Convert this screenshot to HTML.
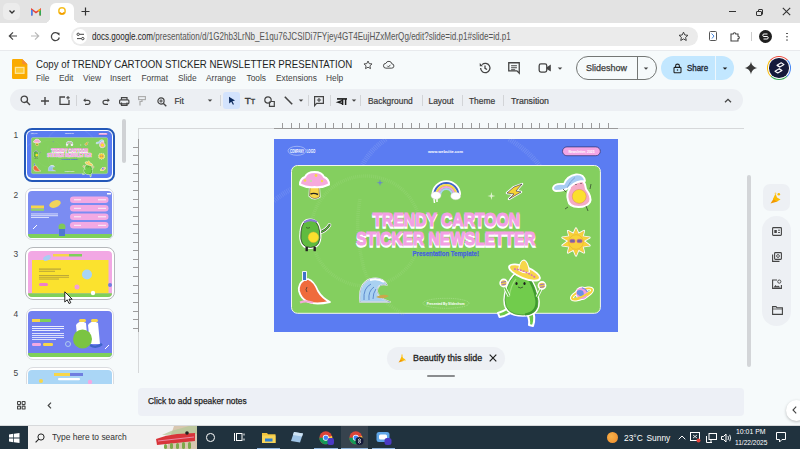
<!DOCTYPE html>
<html><head><meta charset="utf-8">
<style>
*{margin:0;padding:0;box-sizing:border-box}
html,body{width:800px;height:449px;overflow:hidden;background:#f6fafb;font-family:"Liberation Sans",sans-serif;color:#1f1f1f}
.a{position:absolute}
svg{display:block;position:absolute;overflow:visible}
.t{white-space:nowrap;position:absolute;transform-origin:0 0}
</style></head><body>
<!-- ============ BROWSER CHROME ============ -->
<div class="a" style="left:0;top:0;width:800px;height:23px;background:#e3e3e3"></div>
<!-- tab dropdown -->
<div class="a" style="left:3px;top:3px;width:17px;height:17px;border-radius:5px;background:#ececec"></div>
<svg style="left:8px;top:8px" width="8" height="8" viewBox="0 0 8 8"><path d="M1.5 2.5 L4 5 L6.5 2.5" fill="none" stroke="#333" stroke-width="1.3"/></svg>
<!-- gmail icon -->
<svg style="left:31px;top:8px" width="10" height="8" viewBox="0 0 10 8"><path d="M0.8 7.5V1.5L5 4.6 9.2 1.5V7.5" fill="none" stroke="#ea4335" stroke-width="1.5"/><path d="M0.8 7.5V2" stroke="#4285f4" stroke-width="1.6"/><path d="M9.2 7.5V2" stroke="#34a853" stroke-width="1.6"/><path d="M9.2 1.6L7.2 3" stroke="#fbbc04" stroke-width="1.4"/></svg>
<!-- active tab -->
<div class="a" style="left:50px;top:3px;width:24px;height:20px;background:#fff;border-radius:6px 6px 0 0"></div>
<div class="a" style="left:44px;top:17px;width:6px;height:6px;background:radial-gradient(circle at 0 0,#e3e3e3 6px,#fff 6.5px)"></div>
<div class="a" style="left:74px;top:17px;width:6px;height:6px;background:radial-gradient(circle at 100% 0,#e3e3e3 6px,#fff 6.5px)"></div>
<svg style="left:57px;top:6px" width="10" height="10" viewBox="0 0 10 10"><circle cx="5" cy="5" r="3.2" fill="none" stroke="#f6c026" stroke-width="1.5"/><path d="M2.6 6.6A3 3 0 0 0 7.4 6.6" fill="none" stroke="#f29900" stroke-width="1.6"/></svg>
<!-- plus -->
<svg style="left:81px;top:7px" width="9" height="9" viewBox="0 0 9 9"><path d="M4.5 0.5V8.5M0.5 4.5H8.5" stroke="#333" stroke-width="1.2"/></svg>
<!-- window controls -->
<div class="a" style="left:729px;top:11px;width:7px;height:1px;background:#333"></div>
<div class="a" style="left:757.5px;top:9px;width:5.5px;height:5.5px;border:1px solid #333;border-radius:1px;background:#e3e3e3"></div>
<div class="a" style="left:756px;top:10.5px;width:5.5px;height:5.5px;border:1px solid #333;border-radius:1px;background:#e3e3e3"></div>
<svg style="left:782px;top:7px" width="9" height="9" viewBox="0 0 9 9"><path d="M0.8 0.8L8.2 8.2M8.2 0.8L0.8 8.2" stroke="#333" stroke-width="1.1"/></svg>

<!-- toolbar -->
<div class="a" style="left:0;top:23px;width:800px;height:27px;background:#fff"></div>
<div class="a" style="left:0;top:49.5px;width:800px;height:1px;background:#e8eaed"></div>
<svg style="left:8px;top:31px" width="10" height="10" viewBox="0 0 10 10"><path d="M9 5H1.5M5 1.3L1.3 5 5 8.7" fill="none" stroke="#444" stroke-width="1.2"/></svg>
<svg style="left:30px;top:31px" width="10" height="10" viewBox="0 0 10 10"><path d="M1 5H8.5M5 1.3L8.7 5 5 8.7" fill="none" stroke="#b8b8b8" stroke-width="1.2"/></svg>
<svg style="left:50px;top:31px" width="11" height="11" viewBox="0 0 11 11"><path d="M8.8 3.5A4 4 0 1 0 9.3 6.5" fill="none" stroke="#444" stroke-width="1.3"/><path d="M6.5 1.8H9.5V4.8Z" fill="#444"/></svg>
<div class="a" style="left:71px;top:27px;width:627px;height:19px;border-radius:10px;background:#ebebeb"></div>
<div class="a" style="left:73px;top:29px;width:14px;height:15px;border-radius:8px;background:#fff"></div>
<svg style="left:76px;top:32px" width="9" height="9" viewBox="0 0 9 9"><circle cx="2.2" cy="2.3" r="1.2" fill="none" stroke="#444" stroke-width="1"/><path d="M3.5 2.3H8" stroke="#444" stroke-width="1"/><circle cx="6.8" cy="6.6" r="1.2" fill="none" stroke="#444" stroke-width="1"/><path d="M1 6.6H5.5" stroke="#444" stroke-width="1"/></svg>
<div class="t" style="left:92px;top:32px;font-size:10.1px;line-height:10px;color:#1f1f1f;transform:scaleX(0.80)"><span>docs.google.com</span><span style="color:#555">/presentation/d/1G2hb3LrNb_E1qu76JCSIDi7FYjey4GT4EujHZxMerQg/edit?slide=id.p1#slide=id.p1</span></div>
<!-- star in omnibox -->
<svg style="left:678px;top:31px" width="11" height="11" viewBox="0 0 24 24"><path d="M12 2.5l2.9 6.2 6.8.7-5.1 4.6 1.4 6.7L12 17.3l-6 3.4 1.4-6.7-5.1-4.6 6.8-.7z" fill="none" stroke="#333" stroke-width="2"/></svg>
<!-- ext icons -->
<div class="a" style="left:709px;top:31px;width:8px;height:10px;border:1px solid #555;border-radius:1.5px"></div><svg style="left:711px;top:33px" width="4" height="6" viewBox="0 0 4 6"><path d="M0.5 0.5L3 3 1 5.5" fill="none" stroke="#4a8ae0" stroke-width="1"/></svg>
<svg style="left:729px;top:30px" width="12" height="12" viewBox="0 0 12 12"><path d="M2 4H4.2A1.3 1.3 0 0 1 6.8 4H9V6.2A1.3 1.3 0 0 1 9 8.8V11H2Z" fill="none" stroke="#444" stroke-width="1.1"/></svg>
<div class="a" style="left:750.5px;top:32px;width:1px;height:9px;background:#ccc"></div>
<div class="a" style="left:759px;top:30px;width:13px;height:13px;border-radius:50%;background:#1f1f1f"></div>
<svg style="left:761px;top:32px" width="9" height="9" viewBox="0 0 9 9"><path d="M6.5 2H3A1 1 0 0 0 3 4.5H6A1 1 0 0 1 6 7H2.5" fill="none" stroke="#fff" stroke-width="1"/></svg>
<div class="a" style="left:786px;top:32.5px;width:1.6px;height:1.6px;background:#444;border-radius:1px;box-shadow:0 3.3px 0 #444,0 6.6px 0 #444"></div>

<!-- ============ DOCS HEADER ============ -->

<!-- slides logo -->
<svg style="left:12px;top:59.3px" width="15.4" height="20" viewBox="0 0 15 19" preserveAspectRatio="none"><path d="M1.2 0H10L15 5V17.8A1.2 1.2 0 0 1 13.8 19H1.2A1.2 1.2 0 0 1 0 17.8V1.2A1.2 1.2 0 0 1 1.2 0Z" fill="#faab00"/><path d="M10 0V5H15Z" fill="#f38b3a"/><rect x="3.3" y="8" width="8.4" height="5.6" fill="#fcc934" stroke="#fde59a" stroke-width="1.2"/></svg>
<div class="t" style="left:36px;top:58.5px;font-size:11.2px;line-height:11.2px;color:#1f1f1f;transform:scaleX(0.865)">Copy of TRENDY CARTOON STICKER NEWSLETTER PRESENTATION</div>
<svg style="left:362.7px;top:60px" width="10" height="10" viewBox="0 0 24 24"><path d="M12 2.5l2.9 6.2 6.8.7-5.1 4.6 1.4 6.7L12 17.3l-6 3.4 1.4-6.7-5.1-4.6 6.8-.7z" fill="none" stroke="#444" stroke-width="2.2"/></svg>
<svg style="left:383px;top:60px" width="11.5" height="9.6" viewBox="0 0 24 20"><path d="M6 17H18A4.5 4.5 0 0 0 18.5 8 6.5 6.5 0 0 0 6 7 5 5 0 0 0 6 17Z" fill="none" stroke="#444" stroke-width="2"/><path d="M9 12L11.5 14.5 15.5 10" fill="none" stroke="#444" stroke-width="2"/></svg>
<div class="t" style="left:36px;top:74.2px;font-size:8.4px;line-height:8.4px;color:#444">File</div>
<div class="t" style="left:59px;top:74.2px;font-size:8.4px;line-height:8.4px;color:#444">Edit</div>
<div class="t" style="left:83px;top:74.2px;font-size:8.4px;line-height:8.4px;color:#444">View</div>
<div class="t" style="left:110px;top:74.2px;font-size:8.4px;line-height:8.4px;color:#444">Insert</div>
<div class="t" style="left:141.5px;top:74.2px;font-size:8.4px;line-height:8.4px;color:#444">Format</div>
<div class="t" style="left:178px;top:74.2px;font-size:8.4px;line-height:8.4px;color:#444">Slide</div>
<div class="t" style="left:206px;top:74.2px;font-size:8.4px;line-height:8.4px;color:#444">Arrange</div>
<div class="t" style="left:246.5px;top:74.2px;font-size:8.4px;line-height:8.4px;color:#444">Tools</div>
<div class="t" style="left:276px;top:74.2px;font-size:8.4px;line-height:8.4px;color:#444">Extensions</div>
<div class="t" style="left:326px;top:74.2px;font-size:8.4px;line-height:8.4px;color:#444">Help</div>

<!-- right header icons -->
<svg style="left:478px;top:61px" width="14" height="14" viewBox="0 0 24 24"><path d="M4.5 12A8 8 0 1 0 7 6.2" fill="none" stroke="#444" stroke-width="2.2"/><path d="M3 3.5V9H8.5Z" fill="#444"/><path d="M12 7.5V12.5L15.5 14.5" fill="none" stroke="#444" stroke-width="2.2"/></svg>
<svg style="left:507px;top:61px" width="14" height="14" viewBox="0 0 24 24"><path d="M3 3H21V21L17 17H3Z" fill="none" stroke="#444" stroke-width="2.2"/><path d="M7 8H17M7 11.5H17M7 15H14" stroke="#444" stroke-width="1.8"/></svg>
<svg style="left:538px;top:62px" width="14" height="12" viewBox="0 0 24 20"><rect x="2" y="3" width="13" height="14" rx="3" fill="none" stroke="#444" stroke-width="2.2"/><path d="M15 8.5L22 4V16L15 11.5Z" fill="#444"/></svg>
<svg style="left:557px;top:67px" width="6" height="3" viewBox="-1 -0.5 8 4"><path d="M0 0H6L3 3Z" fill="#444"/></svg>

<div class="a" style="left:575.8px;top:56.3px;width:81px;height:23.3px;border:1px solid #747775;border-radius:12px"></div>
<div class="a" style="left:636.5px;top:56.3px;width:1px;height:23.3px;background:#747775"></div>
<div class="t" style="left:585.8px;top:63.6px;font-size:8.8px;line-height:8.8px;color:#3c3c3c;-webkit-text-stroke:.25px #3c3c3c;transform:scaleX(1.02)">Slideshow</div>
<svg style="left:643px;top:67px" width="6" height="3" viewBox="-1 -0.5 8 4"><path d="M0 0H6L3 3Z" fill="#444"/></svg>

<div class="a" style="left:661.4px;top:56.3px;width:73px;height:23.3px;border-radius:12px;background:#c2e7ff"></div>
<div class="a" style="left:715px;top:56.3px;width:1px;height:23.3px;background:#f9fbfd;opacity:.8"></div>
<svg style="left:672.5px;top:62.5px" width="9" height="10.5" viewBox="0 0 10 12"><rect x="1" y="5" width="8" height="6.2" rx="1" fill="none" stroke="#1f1f1f" stroke-width="1.2"/><path d="M2.8 5V3.5A2.2 2.2 0 0 1 7.2 3.5V5" fill="none" stroke="#1f1f1f" stroke-width="1.2"/><circle cx="5" cy="8" r="0.9" fill="#1f1f1f"/></svg>
<div class="t" style="left:686.8px;top:63.8px;font-size:8.8px;line-height:8.8px;color:#1f2a38;-webkit-text-stroke:.35px #1f2a38;transform:scaleX(0.9)">Share</div>
<svg style="left:721.5px;top:67px" width="6" height="3" viewBox="-1 -0.5 8 4"><path d="M0 0H6L3 3Z" fill="#1f1f1f"/></svg>

<svg style="left:743.5px;top:61px" width="14" height="14" viewBox="0 0 24 24"><path d="M12 1C12.8 7 17 11.2 23 12 17 12.8 12.8 17 12 23 11.2 17 7 12.8 1 12 7 11.2 11.2 7 12 1Z" fill="#3a3a3a"/></svg>
<div class="a" style="left:767px;top:55.6px;width:24.4px;height:24.4px;border-radius:50%;background:conic-gradient(from -45deg,#ea4335 0 25%,#4285f4 25% 50%,#34a853 50% 75%,#fbbc04 75% 100%)"></div>
<div class="a" style="left:768.4px;top:57px;width:21.6px;height:21.6px;border-radius:50%;background:#fff"></div>
<div class="a" style="left:769.4px;top:58px;width:19.6px;height:19.6px;border-radius:50%;background:#141a3a"></div>
<svg style="left:772.5px;top:61px" width="13" height="14" viewBox="0 0 13 14"><path d="M4 4.2L8.2 1.8 11 3.6 6.8 6Z M2 10.2L6.2 7.8 9 9.6 4.8 12Z" fill="none" stroke="#fff" stroke-width="1.1" stroke-linejoin="round"/><path d="M4 4.2L6.8 6 M6.2 7.8 L9 9.6" stroke="#fff" stroke-width="1.1"/></svg>

<!-- toolbar pill -->
<div class="a" style="left:10px;top:88.5px;width:733px;height:22.2px;border-radius:11.1px;background:#eceff3"></div>

<svg style="left:20px;top:95px" width="11" height="11" viewBox="0 0 11 11"><circle cx="4.3" cy="4.3" r="3.2" fill="none" stroke="#444" stroke-width="1.3"/><path d="M6.6 6.6L10 10" stroke="#444" stroke-width="1.4"/></svg>
<svg style="left:39.5px;top:95.5px" width="10" height="10" viewBox="0 0 10 10"><path d="M5 1V9M1 5H9" stroke="#444" stroke-width="1.4"/></svg>
<svg style="left:58.5px;top:96px" width="11" height="9" viewBox="0 0 11 9"><path d="M6 1H1V8.3H10V4" fill="none" stroke="#444" stroke-width="1.3"/><path d="M9 0V3.4M7.3 1.7H10.7" stroke="#444" stroke-width="1.1"/></svg>
<div class="a" style="left:75.5px;top:95px;width:1px;height:11px;background:#d2d4d7"></div>
<svg style="left:82.5px;top:97.5px" width="8" height="7" viewBox="0 0 8 7"><path d="M2 2.3H5A2 2 0 0 1 5 6.3H2" fill="none" stroke="#444" stroke-width="1.2"/><path d="M0.2 2.3L2.5 0.3V4.3Z" fill="#444"/></svg>
<svg style="left:101.5px;top:97.5px" width="8" height="7" viewBox="0 0 8 7"><path d="M6 2.3H3A2 2 0 0 0 3 6.3H6" fill="none" stroke="#444" stroke-width="1.2"/><path d="M7.8 2.3L5.5 0.3V4.3Z" fill="#444"/></svg>
<svg style="left:119px;top:96.5px" width="10.5" height="9" viewBox="0 0 10.5 9"><rect x="0.6" y="2.8" width="9.3" height="4" rx="1" fill="none" stroke="#444" stroke-width="1.2"/><path d="M2.5 2.8V0.6H8V2.8M2.5 5.5V8.4H8V5.5" fill="none" stroke="#444" stroke-width="1.2"/></svg>
<svg style="left:138px;top:96px" width="8" height="10" viewBox="0 0 8 10"><rect x="0.6" y="0.6" width="6.8" height="3" fill="none" stroke="#aaa" stroke-width="1.1"/><path d="M4 3.6V5.5H2V9.5" fill="none" stroke="#aaa" stroke-width="1.2"/></svg>
<svg style="left:156.5px;top:96.5px" width="10" height="10" viewBox="0 0 10 10"><circle cx="4" cy="4" r="3.1" fill="none" stroke="#444" stroke-width="1.2"/><path d="M6.2 6.2L9.3 9.3" stroke="#444" stroke-width="1.3"/><path d="M4 2.3V5.7M2.3 4H5.7" stroke="#444" stroke-width="1"/></svg>
<div class="t" style="left:174.5px;top:96.8px;font-size:8.4px;line-height:8.4px;color:#3a3a3a;-webkit-text-stroke:.2px #3a3a3a">Fit</div>
<svg style="left:207px;top:99.3px" width="6" height="3" viewBox="-1 -0.5 8 4"><path d="M0 0H6L3 3Z" fill="#444"/></svg>
<div class="a" style="left:219.5px;top:95px;width:1px;height:11px;background:#d2d4d7"></div>
<div class="a" style="left:223px;top:91.8px;width:16.8px;height:16.8px;border-radius:3px;background:#d3e3fd"></div>
<svg style="left:227.5px;top:96px" width="8" height="9" viewBox="0 0 8 9"><path d="M1 0.8L7 4.6 4.4 5.2 6 8.3 4.9 8.8 3.3 5.8 1.2 7.5Z" fill="#0d2a5c"/></svg>
<div class="t" style="left:244.8px;top:96.2px;font-size:9.8px;line-height:9.8px;color:#3a3a3a;-webkit-text-stroke:.35px #3a3a3a">T<span style="font-size:7.2px">T</span></div>
<svg style="left:264px;top:95.5px" width="11" height="11" viewBox="0 0 11 11"><circle cx="4" cy="4" r="3.2" fill="none" stroke="#444" stroke-width="1.2"/><path d="M5.5 5.5V10.3H10.3V5.5H7" fill="none" stroke="#444" stroke-width="1.2"/></svg>
<svg style="left:283.5px;top:96px" width="9" height="9" viewBox="0 0 9 9"><path d="M0.8 0.8L8.2 8.2" stroke="#444" stroke-width="1.6"/></svg>
<svg style="left:298px;top:99.3px" width="6" height="3" viewBox="-1 -0.5 8 4"><path d="M0 0H6L3 3Z" fill="#444"/></svg>
<div class="a" style="left:307.5px;top:95px;width:1px;height:11px;background:#d2d4d7"></div>
<svg style="left:314px;top:95.5px" width="10" height="11" viewBox="0 0 10 11"><path d="M0.6 0.6H9.4V7.4H2.6L0.6 9.6Z" fill="none" stroke="#444" stroke-width="1.2"/><path d="M5 1.9V6.1M2.9 4H7.1" stroke="#444" stroke-width="1.1"/></svg>
<div class="a" style="left:329.5px;top:95px;width:1px;height:11px;background:#d2d4d7"></div>
<svg style="left:337px;top:97.8px" width="10" height="7" viewBox="0 0 10 7"><path d="M0 0.9H10" stroke="#1f1f1f" stroke-width="1.6"/><path d="M5.6 0.9V6.9M8.6 0.9V6.9" stroke="#1f1f1f" stroke-width="1.5"/><path d="M5.6 2.4L1 4.2 5.6 5.6" fill="none" stroke="#1f1f1f" stroke-width="1.5"/></svg>
<svg style="left:351px;top:99.3px" width="6" height="3" viewBox="-1 -0.5 8 4"><path d="M0 0H6L3 3Z" fill="#444"/></svg>
<div class="a" style="left:360px;top:95px;width:1px;height:11px;background:#d2d4d7"></div>
<div class="t" style="left:368px;top:96.8px;font-size:8.4px;line-height:8.4px;color:#3a3a3a;-webkit-text-stroke:.2px #3a3a3a">Background</div>
<div class="a" style="left:421.5px;top:95px;width:1px;height:11px;background:#d2d4d7"></div>
<div class="t" style="left:428.5px;top:96.8px;font-size:8.4px;line-height:8.4px;color:#3a3a3a;-webkit-text-stroke:.2px #3a3a3a">Layout</div>
<div class="a" style="left:461.5px;top:95px;width:1px;height:11px;background:#d2d4d7"></div>
<div class="t" style="left:469px;top:96.8px;font-size:8.4px;line-height:8.4px;color:#3a3a3a;-webkit-text-stroke:.2px #3a3a3a">Theme</div>
<div class="a" style="left:502.5px;top:95px;width:1px;height:11px;background:#d2d4d7"></div>
<div class="t" style="left:511px;top:96.8px;font-size:8.4px;line-height:8.4px;color:#3a3a3a;-webkit-text-stroke:.2px #3a3a3a;transform:scaleX(1.04)">Transition</div>
<svg style="left:723.5px;top:97.5px" width="8" height="5" viewBox="0 0 8 5"><path d="M1 4.3L4 1.3 7 4.3" fill="none" stroke="#444" stroke-width="1.3"/></svg>

<!-- ============ FILMSTRIP ============ -->
<div class="a" style="left:121.5px;top:119px;width:4.5px;height:44px;border-radius:3px;background:#d0d2d5"></div>
<div class="t" style="left:13.5px;top:131px;font-size:8.4px;line-height:8.4px;color:#444">1</div>
<div class="t" style="left:13.5px;top:190.5px;font-size:8.4px;line-height:8.4px;color:#444">2</div>
<div class="t" style="left:13.5px;top:250px;font-size:8.4px;line-height:8.4px;color:#444">3</div>
<div class="t" style="left:13.5px;top:309.5px;font-size:8.4px;line-height:8.4px;color:#444">4</div>
<div class="t" style="left:13.5px;top:369px;font-size:8.4px;line-height:8.4px;color:#444">5</div>
<!-- thumb1 selected -->
<div class="a" style="left:24px;top:127.8px;width:91.2px;height:53.8px;border-radius:8px;border:2.2px solid #2458b8;background:#fff"></div>
<div class="a" style="left:27.1px;top:131px;width:85px;height:47.4px;border-radius:5px;overflow:hidden"><svg style="left:0;top:0" width="85" height="47.4" viewBox="0 0 344 193" preserveAspectRatio="none"><use href="#slideG"/></svg></div>
<!-- thumb2 -->
<div class="a" style="left:25.3px;top:188.3px;width:89px;height:51.5px;border-radius:7px;border:1px solid #dadce0;background:#fff"></div>
<div class="a" style="left:27.5px;top:190.5px;width:84.5px;height:47.5px;border-radius:4px;overflow:hidden">
<svg style="left:0;top:0" width="84.5" height="47.5" viewBox="0 0 84.5 47.5">
<rect width="84.5" height="47.5" fill="#7b8cf2"/>
<rect y="43" width="84.5" height="4.5" fill="#7fd05a"/>
<g fill="#f3a9e3"><rect x="42" y="5.5" width="38.5" height="6.6" rx="3.3"/><rect x="42" y="14" width="38.5" height="6.6" rx="3.3"/><rect x="42" y="22.5" width="38.5" height="6.6" rx="3.3"/><rect x="42" y="31" width="38.5" height="6.6" rx="3.3"/></g>
<g fill="#fff" opacity=".85"><rect x="46" y="8.3" width="7" height="1"/><rect x="70" y="8.3" width="8" height="1"/><rect x="46" y="16.8" width="7" height="1"/><rect x="70" y="16.8" width="8" height="1"/><rect x="46" y="25.3" width="7" height="1"/><rect x="70" y="25.3" width="8" height="1"/><rect x="46" y="33.8" width="7" height="1"/><rect x="70" y="33.8" width="8" height="1"/></g>
<rect x="3" y="14.5" width="13" height="3" fill="#f7d64a"/><rect x="3" y="17.8" width="13" height="2" fill="#8fd46a"/>
<g fill="#fff" opacity=".8"><rect x="3" y="22.5" width="27" height=".9"/><rect x="3" y="24.3" width="27" height=".9"/><rect x="3" y="26.1" width="18" height=".9"/></g>
<ellipse cx="27" cy="13" rx="6" ry="3.5" fill="#f0d45a" transform="rotate(-20 27 13)"/>
<circle cx="34" cy="36" r="3.5" fill="#7fc85a"/><rect x="31" y="38" width="6" height="7" fill="#4f78d0"/>
<path d="M5 38L9 34" stroke="#fff" stroke-width="1"/>
<rect x="79" y="2" width="4" height="1.5" fill="#fff"/>
</svg></div>
<!-- thumb3 hover -->
<div class="a" style="left:24.7px;top:247.3px;width:90.3px;height:52.7px;border-radius:8px;border:1.5px solid #b5b8bb;background:#fff"></div>
<div class="a" style="left:27.5px;top:250.5px;width:84.5px;height:46.5px;border-radius:4px;overflow:hidden">
<svg style="left:0;top:0" width="84.5" height="46.5" viewBox="0 0 84.5 46.5">
<rect width="84.5" height="46.5" fill="#f2a8e4"/>
<rect x="4" y="9" width="76.5" height="33.3" fill="#fbe22e"/>
<rect y="42.3" width="84.5" height="4.2" fill="#7fd05a"/>
<rect x="25" y="3" width="16" height="2.5" fill="#f7d64a"/><rect x="41" y="3" width="13" height="2.5" fill="#7fd05a"/>
<g fill="#8a7a40" opacity=".6"><rect x="11" y="17.5" width="22" height="1.2"/><rect x="11" y="19.8" width="16" height="1"/><rect x="11" y="24" width="30" height=".9"/><rect x="11" y="25.8" width="30" height=".9"/><rect x="11" y="27.6" width="20" height=".9"/></g>
<rect x="11" y="32" width="9" height="3" rx="1.5" fill="#ef7fc8"/>
<circle cx="59" cy="23.5" r="5" fill="#a8d4f5"/>
<ellipse cx="19" cy="7" rx="4" ry="2.5" fill="#a8cdf3" transform="rotate(-25 19 7)"/>
<circle cx="49" cy="36" r="2.5" fill="#f4a0d8"/>
<circle cx="65" cy="42" r="2.2" fill="#fff"/>
<circle cx="82" cy="34" r="2" fill="#6f7fe0"/>
</svg></div>
<!-- thumb4 -->
<div class="a" style="left:25.7px;top:308.3px;width:88.3px;height:51.5px;border-radius:7px;border:1px solid #dadce0;background:#fff"></div>
<div class="a" style="left:28px;top:311px;width:84px;height:46px;border-radius:4px;overflow:hidden">
<svg style="left:0;top:0" width="84" height="46" viewBox="0 0 84 46">
<rect width="84" height="46" fill="#717ff0"/>
<rect y="42" width="84" height="4" fill="#7fd05a"/>
<rect x="4" y="8" width="8" height="3" fill="#f7d64a"/><rect x="12" y="8" width="11" height="3" fill="#7fd05a"/>
<g fill="#fff" opacity=".85"><rect x="4" y="15" width="32" height="1"/><rect x="4" y="17" width="32" height="1"/><rect x="4" y="19" width="28" height="1"/><rect x="4" y="22" width="32" height=".9"/><rect x="4" y="24" width="32" height=".9"/><rect x="4" y="26" width="32" height=".9"/><rect x="4" y="28" width="24" height=".9"/></g>
<rect x="4" y="32" width="9" height="3" rx="1.2" fill="#f3a9e3"/><rect x="15" y="32" width="10" height="3" rx="1.2" fill="#f7d64a"/>
<path d="M48 14Q52 8 58 12L60 34H50Z" fill="#fff"/><path d="M60 14Q64 8 70 12L72 33H62Z" fill="#fff"/>
<rect x="51" y="8" width="7" height="3" rx="1.5" fill="#f7d64a"/><rect x="63" y="8" width="7" height="3" rx="1.5" fill="#f7d64a"/>
<path d="M62 34Q68 38 74 33" stroke="#3f64c8" stroke-width="2.5" fill="none"/>
<circle cx="54.5" cy="28" r="9.5" fill="#7bc442"/>
<circle cx="40" cy="33" r="2.5" fill="none" stroke="#bde" stroke-width=".8"/>
<path d="M77 38L81 34" stroke="#fff" stroke-width="1"/>
</svg></div>
<!-- thumb5 (clipped) -->
<div class="a" style="left:0;top:360px;width:130px;height:23.5px;overflow:hidden">
 <div class="a" style="left:25.7px;top:7.4px;width:88.3px;height:51.5px;border-radius:7px;border:1px solid #dadce0;background:#fff"></div>
 <div class="a" style="left:28px;top:9.5px;width:84px;height:46px;border-radius:4px;overflow:hidden">
<svg style="left:0;top:0" width="84" height="46" viewBox="0 0 84 46">
<rect width="84" height="46" fill="#aad6f6"/>
<rect x="26" y="3" width="16" height="3" fill="#f7d64a"/><rect x="42" y="3" width="13" height="3" fill="#6f7fe0"/>
<rect x="30" y="8" width="22" height="2.2" rx="1" fill="#fff"/>
<circle cx="13" cy="11" r="2" fill="#f7d64a"/><circle cx="62" cy="12" r="2.2" fill="#f3a9e3"/>
</svg></div>
</div>

<svg style="left:64px;top:291px" width="9" height="13" viewBox="0 0 9 13"><path d="M0.8 0.8V11L3.2 8.8 5 12.5 6.8 11.7 5 8.2H8.2Z" fill="#fff" stroke="#111" stroke-width=".9" stroke-linejoin="round"/></svg>
<!-- ============ CANVAS / RULERS ============ -->
<div class="a" style="left:137.5px;top:127.5px;width:606px;height:1px;background:#d6d8da"></div>
<div class="a" style="left:137.5px;top:127.5px;width:1px;height:245px;background:#d6d8da"></div>
<div class="a" style="left:274px;top:127.5px;width:344px;height:1px;background:#9a9a9a"></div>
<div class="a" style="left:137.5px;top:139px;width:1px;height:193px;background:#9a9a9a"></div>
<div class="a" style="left:282.00px;top:123px;width:1px;height:5px;background:#9c9c9c"></div><div class="a" style="left:290.58px;top:123px;width:1px;height:5px;background:#9c9c9c"></div><div class="a" style="left:299.16px;top:123px;width:1px;height:5px;background:#9c9c9c"></div><div class="a" style="left:307.74px;top:123px;width:1px;height:5px;background:#9c9c9c"></div><div class="a" style="left:316.32px;top:123px;width:1px;height:5px;background:#9c9c9c"></div><div class="a" style="left:324.90px;top:123px;width:1px;height:5px;background:#9c9c9c"></div><div class="a" style="left:333.48px;top:123px;width:1px;height:5px;background:#9c9c9c"></div><div class="a" style="left:342.06px;top:123px;width:1px;height:5px;background:#9c9c9c"></div><div class="a" style="left:350.64px;top:123px;width:1px;height:5px;background:#9c9c9c"></div><div class="a" style="left:359.22px;top:123px;width:1px;height:5px;background:#9c9c9c"></div><div class="a" style="left:367.80px;top:123px;width:1px;height:5px;background:#9c9c9c"></div><div class="a" style="left:376.38px;top:123px;width:1px;height:5px;background:#9c9c9c"></div><div class="a" style="left:384.96px;top:123px;width:1px;height:5px;background:#9c9c9c"></div><div class="a" style="left:393.54px;top:123px;width:1px;height:5px;background:#9c9c9c"></div><div class="a" style="left:402.12px;top:123px;width:1px;height:5px;background:#9c9c9c"></div><div class="a" style="left:410.70px;top:123px;width:1px;height:5px;background:#9c9c9c"></div><div class="a" style="left:419.28px;top:123px;width:1px;height:5px;background:#9c9c9c"></div><div class="a" style="left:427.86px;top:123px;width:1px;height:5px;background:#9c9c9c"></div><div class="a" style="left:436.44px;top:123px;width:1px;height:5px;background:#9c9c9c"></div><div class="a" style="left:445.02px;top:123px;width:1px;height:5px;background:#9c9c9c"></div><div class="a" style="left:453.60px;top:123px;width:1px;height:5px;background:#9c9c9c"></div><div class="a" style="left:462.18px;top:123px;width:1px;height:5px;background:#9c9c9c"></div><div class="a" style="left:470.76px;top:123px;width:1px;height:5px;background:#9c9c9c"></div><div class="a" style="left:479.34px;top:123px;width:1px;height:5px;background:#9c9c9c"></div><div class="a" style="left:487.92px;top:123px;width:1px;height:5px;background:#9c9c9c"></div><div class="a" style="left:496.50px;top:123px;width:1px;height:5px;background:#9c9c9c"></div><div class="a" style="left:505.08px;top:123px;width:1px;height:5px;background:#9c9c9c"></div><div class="a" style="left:513.66px;top:123px;width:1px;height:5px;background:#9c9c9c"></div><div class="a" style="left:522.24px;top:123px;width:1px;height:5px;background:#9c9c9c"></div><div class="a" style="left:530.82px;top:123px;width:1px;height:5px;background:#9c9c9c"></div><div class="a" style="left:539.40px;top:123px;width:1px;height:5px;background:#9c9c9c"></div><div class="a" style="left:547.98px;top:123px;width:1px;height:5px;background:#9c9c9c"></div><div class="a" style="left:556.56px;top:123px;width:1px;height:5px;background:#9c9c9c"></div><div class="a" style="left:565.14px;top:123px;width:1px;height:5px;background:#9c9c9c"></div><div class="a" style="left:573.72px;top:123px;width:1px;height:5px;background:#9c9c9c"></div><div class="a" style="left:582.30px;top:123px;width:1px;height:5px;background:#9c9c9c"></div><div class="a" style="left:590.88px;top:123px;width:1px;height:5px;background:#9c9c9c"></div><div class="a" style="left:599.46px;top:123px;width:1px;height:5px;background:#9c9c9c"></div><div class="a" style="left:608.04px;top:123px;width:1px;height:5px;background:#9c9c9c"></div><div class="a" style="left:133px;top:146.80px;width:5px;height:1px;background:#9c9c9c"></div><div class="a" style="left:133px;top:155.42px;width:5px;height:1px;background:#9c9c9c"></div><div class="a" style="left:133px;top:164.04px;width:5px;height:1px;background:#9c9c9c"></div><div class="a" style="left:133px;top:172.66px;width:5px;height:1px;background:#9c9c9c"></div><div class="a" style="left:133px;top:181.28px;width:5px;height:1px;background:#9c9c9c"></div><div class="a" style="left:133px;top:189.90px;width:5px;height:1px;background:#9c9c9c"></div><div class="a" style="left:133px;top:198.52px;width:5px;height:1px;background:#9c9c9c"></div><div class="a" style="left:133px;top:207.14px;width:5px;height:1px;background:#9c9c9c"></div><div class="a" style="left:133px;top:215.76px;width:5px;height:1px;background:#9c9c9c"></div><div class="a" style="left:133px;top:224.38px;width:5px;height:1px;background:#9c9c9c"></div><div class="a" style="left:133px;top:233.00px;width:5px;height:1px;background:#9c9c9c"></div><div class="a" style="left:133px;top:241.62px;width:5px;height:1px;background:#9c9c9c"></div><div class="a" style="left:133px;top:250.24px;width:5px;height:1px;background:#9c9c9c"></div><div class="a" style="left:133px;top:258.86px;width:5px;height:1px;background:#9c9c9c"></div><div class="a" style="left:133px;top:267.48px;width:5px;height:1px;background:#9c9c9c"></div><div class="a" style="left:133px;top:276.10px;width:5px;height:1px;background:#9c9c9c"></div><div class="a" style="left:133px;top:284.72px;width:5px;height:1px;background:#9c9c9c"></div><div class="a" style="left:133px;top:293.34px;width:5px;height:1px;background:#9c9c9c"></div><div class="a" style="left:133px;top:301.96px;width:5px;height:1px;background:#9c9c9c"></div><div class="a" style="left:133px;top:310.58px;width:5px;height:1px;background:#9c9c9c"></div><div class="a" style="left:133px;top:319.20px;width:5px;height:1px;background:#9c9c9c"></div><div class="a" style="left:133px;top:327.82px;width:5px;height:1px;background:#9c9c9c"></div>
<!-- right scrollbar -->
<div class="a" style="left:746.5px;top:175px;width:4px;height:192px;border-radius:2px;background:#d3d5d8"></div>

<!-- ============ SLIDE ============ -->
<svg style="left:274px;top:139px" width="344" height="193" viewBox="0 0 344 193">
<defs>
<clipPath id="sc"><rect width="344" height="193"/></clipPath>
</defs>
<g id="slideG" clip-path="url(#sc)">
<rect width="344" height="193" fill="#5b7cf2"/>
<!-- deco dotted arcs on blue -->
<path d="M112 0 Q95 12 88 27" fill="none" stroke="#7c97f4" stroke-width="5" stroke-dasharray="1 1" opacity=".6"/>
<path d="M0 62 Q8 55 17.5 50" fill="none" stroke="#7c97f4" stroke-width="5" stroke-dasharray="1 1" opacity=".5"/>
<path d="M235 0 Q260 15 275 40" fill="none" stroke="#7c97f4" stroke-width="5" stroke-dasharray="1 1" opacity=".6"/>
<!-- green panel -->
<rect x="17.5" y="26.5" width="308.9" height="147.8" rx="6" fill="#84cf5f" stroke="#f2f7ee" stroke-width="1"/>
<!-- deco faint rings on green -->
<g fill="none" stroke="#a3dd86" stroke-width="3.5" stroke-dasharray="1 1" opacity=".3">
<circle cx="92" cy="92" r="55"/>
<path d="M86 60 Q80 90 90 130 Q100 160 130 175"/>
</g>
<!-- header -->
<ellipse cx="23" cy="11.8" rx="9" ry="4.5" fill="none" stroke="#a9bdf7" stroke-width=".8"/>
<text x="16" y="13.5" font-family="Liberation Sans" font-weight="700" font-size="4.6" fill="#fff" textLength="14" lengthAdjust="spacingAndGlyphs">COMPANY</text>
<text x="32.5" y="13.5" font-family="Liberation Sans" font-weight="700" font-size="4.6" fill="#fff" textLength="8.8" lengthAdjust="spacingAndGlyphs">LOGO</text>
<text x="154" y="13.5" font-family="Liberation Sans" font-weight="700" font-size="4.4" fill="#fff" textLength="35" lengthAdjust="spacingAndGlyphs">www.websiite.com</text>
<rect x="288.5" y="7.9" width="37.8" height="8.8" rx="4.4" fill="#f3a6e6" stroke="#2a2f6a" stroke-width=".7"/>
<text x="294.5" y="13.9" font-family="Liberation Sans" font-weight="700" font-size="4.4" fill="#fff" textLength="26" lengthAdjust="spacingAndGlyphs">Newsletter, 2025</text>

<!-- title -->
<g font-family="Liberation Sans" font-weight="700" text-anchor="start">
<text x="98.5" y="89.2" font-size="19" fill="#fff" textLength="147.5" lengthAdjust="spacingAndGlyphs" stroke="#fff" stroke-width="1.4">TRENDY CARTOON</text>
<text x="98.5" y="87.3" font-size="19" fill="#f3a0e4" textLength="147.5" lengthAdjust="spacingAndGlyphs" stroke="#f3a0e4" stroke-width="1">TRENDY CARTOON</text>
<text x="82.2" y="107.7" font-size="19" fill="#fff" textLength="179.3" lengthAdjust="spacingAndGlyphs" stroke="#fff" stroke-width="1.4">STICKER NEWSLETTER</text>
<text x="82.2" y="105.8" font-size="19" fill="#f3a0e4" textLength="179.3" lengthAdjust="spacingAndGlyphs" stroke="#f3a0e4" stroke-width="1">STICKER NEWSLETTER</text>
<text x="138.5" y="117" font-size="7.4" fill="#4a68e6" stroke="#3d5ad0" stroke-width=".25" textLength="66.5" lengthAdjust="spacingAndGlyphs">Presentation Template!</text>
</g>
<!-- presented by -->
<ellipse cx="172" cy="164.3" rx="23" ry="5" fill="none" stroke="#b5e49c" stroke-width=".6" stroke-dasharray="1 .8"/>
<text x="152.7" y="166" font-family="Liberation Sans" font-weight="700" font-size="4.2" fill="#fff" textLength="38" lengthAdjust="spacingAndGlyphs">Presented By Slidesfrom</text>

<!-- sparkles -->
<path d="M106 40.5L106.8 43 109.3 43.8 106.8 44.6 106 47.1 105.2 44.6 102.7 43.8 105.2 43Z" fill="#6a8cc0"/>
<path d="M217.4 53L218.2 56.2 221.4 57 218.2 57.8 217.4 61 216.6 57.8 213.4 57 216.6 56.2Z" fill="#dff3d0"/>

<!-- mushroom -->
<g stroke-linejoin="round">
<path d="M36 47 L35.5 57 Q40 61.5 45.5 58 L45 47Z" fill="#f7d64a" stroke="#fff" stroke-width="2"/>
<path d="M36 47 L35.5 57 Q40 61.5 45.5 58 L45 47Z" fill="#f7d64a" stroke="#3b3b2a" stroke-width=".5"/>
<path d="M26 45.5 Q26 40 31 38 Q33 33 40.5 33 Q48 33 50 38 Q55 40 55 45.5 Q48 49 40.5 48 Q33 49 26 45.5Z" fill="#f6a9dc" stroke="#fff" stroke-width="2"/>
<path d="M36.5 55 Q40 53.5 44 55.5" stroke="#222" stroke-width="1.4" fill="none"/>
<circle cx="31" cy="41.5" r="1.3" fill="#f7d64a"/><circle cx="42" cy="36.5" r="1.4" fill="#f7d64a"/><circle cx="37" cy="42" r="1.1" fill="#bde0a0"/><circle cx="48" cy="42" r="1.2" fill="#f7d64a"/>
</g>

<!-- rainbow -->
<g fill="none">
<path d="M159.8 56 A12.5 12.5 0 0 1 184.8 56" stroke="#fff" stroke-width="4.6"/>
<path d="M160.3 56 A12 12 0 0 1 184.3 56" stroke="#3f63c8" stroke-width="2"/>
<path d="M162.3 56 A10 10 0 0 1 182.3 56" stroke="#f7d64a" stroke-width="2"/>
<path d="M164.3 56 A8 8 0 0 1 180.3 56" stroke="#f29ee3" stroke-width="2"/>
<path d="M166.3 56 A6 6 0 0 1 178.3 56" stroke="#a9d1f1" stroke-width="1.8"/>
</g>
<ellipse cx="162" cy="56.5" rx="5" ry="3.8" fill="#fff" stroke="#ccc" stroke-width=".4"/>
<ellipse cx="181.7" cy="57" rx="5" ry="3.8" fill="#fff" stroke="#ccc" stroke-width=".4"/>
<path d="M160 60 L160.5 64 M163 60 L163 63" stroke="#fff" stroke-width="1.5"/>

<!-- lightning -->
<path d="M240 48 L233 54 L240 55 L235 60 L247 53 L242 52 L248 45Z" fill="#f5d334" stroke="#fff" stroke-width="2.4" stroke-linejoin="round"/>
<path d="M240 48 L233 54 L240 55 L235 60 L247 53 L242 52 L248 45Z" fill="#f5d334" stroke="#2b2b4a" stroke-width=".6" stroke-linejoin="round"/>

<!-- pink avocado with blue hair -->
<g stroke-linejoin="round">
<path d="M303.4 40 Q311 40 312 50 Q318 58 316 63 Q313 68 304.5 68 Q295 68 294 61 Q292 55 296 49 Q296 40 303.4 40Z" fill="#f5abc6" stroke="#fff" stroke-width="2"/>
<circle cx="305.2" cy="57.4" r="7" fill="#fbe02e" stroke="#d88a5a" stroke-width=".5"/>
<path d="M279 49 Q280 44 290 45 Q293 37 302 35.5 Q310 35 311 42 Q302 42 297 47 Q292 52 282 52 Q279 51.5 279 49Z" fill="#a8cdf3" stroke="#fff" stroke-width="1.8"/>
<path d="M301 38.5 Q296 42 293 49" stroke="#4a77b6" stroke-width=".5" fill="none"/>
<circle cx="302" cy="45.5" r=".6" fill="#333"/><circle cx="307" cy="44.5" r=".6" fill="#333"/>
<path d="M294 68 L291 70 M312 67 L314 72 M316 50 L317 45 M292 53 L289 50" stroke="#2d3b2a" stroke-width=".7"/>
</g>

<!-- small avocado -->
<g stroke-linejoin="round">
<path d="M44 94 Q52 92 55.5 86" stroke="#fff" stroke-width="3.6" fill="none" stroke-linecap="round"/>
<path d="M44 94 Q52 92 55.5 86" stroke="#2d3b2a" stroke-width="2.2" fill="none" stroke-linecap="round"/>
<path d="M44 94 Q52 92 55.5 86" stroke="#5fbf3e" stroke-width="1.2" fill="none" stroke-linecap="round"/>
<path d="M36 81 Q44 81 45.5 92 Q48 108 36.5 108.5 Q25 108.5 27 93 Q28 81 36 81Z" fill="#fff" stroke="#fff" stroke-width="3"/>
<path d="M36 81 Q44 81 45.5 92 Q48 108 36.5 108.5 Q25 108.5 27 93 Q28 81 36 81Z" fill="#5fbb3f" stroke="#2d3b2a" stroke-width=".8"/>
<circle cx="39.4" cy="98.2" r="5.2" fill="#fbe02e" stroke="#e5b53a" stroke-width=".4"/>
<path d="M30 83.5 Q36 79 43 83" stroke="#8a7bd6" stroke-width="2" fill="none"/>
<path d="M32 88.5 Q34 90 36 88.5" stroke="#1d1d1d" stroke-width=".5" fill="none"/>
<rect x="31.5" y="108" width="2.4" height="4.2" fill="#222"/><rect x="39.5" y="108" width="2.4" height="4.2" fill="#222"/>
</g>

<!-- sun -->
<g>
<path d="M302 89.5 L304.5 95 310 92 308.5 97.5 315.5 98.5 309.5 102 315.5 106.5 308.5 107.5 310 113.5 304.5 110.5 302 116.5 299.5 110.5 294 113.5 295.5 107.5 288.5 106.5 294.5 102 288.5 98.5 295.5 97.5 294 92 299.5 95Z" fill="#fff" stroke="#fff" stroke-width="2.2" stroke-linejoin="round"/>
<path d="M302 89.5 L304.5 95 310 92 308.5 97.5 315.5 98.5 309.5 102 315.5 106.5 308.5 107.5 310 113.5 304.5 110.5 302 116.5 299.5 110.5 294 113.5 295.5 107.5 288.5 106.5 294.5 102 288.5 98.5 295.5 97.5 294 92 299.5 95Z" fill="#f9d43a" stroke="#e0a928" stroke-width=".4"/>
<circle cx="302" cy="103" r="7.3" fill="#f9d43a" stroke="#e0a928" stroke-width=".5"/>
<rect x="295.8" y="100.3" width="5.2" height="3.4" rx="1.5" fill="#7a6aa0" stroke="#e46a8a" stroke-width=".6"/><rect x="303" y="100.3" width="5.2" height="3.4" rx="1.5" fill="#7a6aa0" stroke="#e46a8a" stroke-width=".6"/>
</g>

<!-- chili -->
<g stroke-linejoin="round">
<path d="M30 141 Q24 145 25 152 Q27 160 34 163 Q42 166 56 163 Q48 159 44 152 Q40 142 34 140Z" fill="#ef6b3c" stroke="#fff" stroke-width="1.8"/>
<path d="M33 148 Q31 151 33 153" stroke="#333" stroke-width=".7" fill="none"/>
<path d="M28.5 132.5 H32.5 V141.5 H28.5Z" fill="#3f72c9" stroke="#fff" stroke-width=".9"/>
<path d="M26 163.5 Q32 161 39 163.8" stroke="#f4a9d6" stroke-width="2.2" fill="none"/>
</g>

<!-- wave -->
<g stroke-linejoin="round">
<path d="M86 163 Q84 145 96 140 Q108 137 113 146 Q104 144 103 152 Q104 159 116 163Z" fill="#a9d1f1" stroke="#fff" stroke-width="1.4"/>
<path d="M86 163 Q84 145 96 140 Q108 137 113 146 Q104 144 103 152 Q104 159 116 163Z" fill="none" stroke="#3c5a8a" stroke-width=".4"/>
<path d="M90 161 Q89 149 97 145 M95 161 Q94 152 100 148 M99 160 Q99 154 102 150" stroke="#3c6cbf" stroke-width=".7" fill="none"/>
<path d="M96 141 Q104 139 110 143" stroke="#fff" stroke-width="2" fill="none"/>
<path d="M102 158 Q109 154 115 157 Q109 161 102 158Z" fill="#c9a84a"/>
</g>

<!-- planet -->
<g>
<ellipse cx="308" cy="155" rx="11" ry="3.6" fill="none" stroke="#fff" stroke-width="3.8" transform="rotate(-25 308 155)"/>
<circle cx="308" cy="154.3" r="6.8" fill="#fff"/>
<ellipse cx="308" cy="155" rx="11" ry="3.6" fill="none" stroke="#f6d43a" stroke-width="1.8" transform="rotate(-25 308 155)"/>
<circle cx="308" cy="154.3" r="5.8" fill="#ef9ee0"/>
<path d="M303 152 Q306 150 309 152 Q311 156 308 158 Q305 157 303 155Z" fill="#6b8ee8"/>
<path d="M308 148.8 Q312 150 313.5 153" stroke="#6b8ee8" stroke-width="1.2" fill="none"/>
<path d="M298.5 160.2 Q306 160 316 153" fill="none" stroke="#f6d43a" stroke-width="1.8"/>
</g>

<!-- big avocado -->
<g stroke-linejoin="round">
<path d="M236 168 Q230 172 224 174 L225.5 178 Q233 177 239 172Z" fill="#6cc94a" stroke="#fff" stroke-width="2"/>
<path d="M252 172 Q256 180 255 186 L259 187 Q262 178 258 170Z" fill="#6cc94a" stroke="#fff" stroke-width="2"/>
<path d="M240 137 Q248 131 254 137 Q262 148 264 162 Q265 176 249 176 Q231 176 231 161 Q232 146 240 137Z" fill="#fff" stroke="#fff" stroke-width="3.5"/>
<path d="M240 137 Q248 131 254 137 Q262 148 264 162 Q265 176 249 176 Q231 176 231 161 Q232 146 240 137Z" fill="#71cc4c" stroke="#3c8f2c" stroke-width=".7"/>
<path d="M252 136 Q261 148 262.5 162 Q263 174 251 175.5" stroke="#3f9a2f" stroke-width="2.2" fill="none"/>
<path d="M235 158 Q237 146 242 140" stroke="#9be07a" stroke-width="1.2" fill="none"/>
<ellipse cx="242.5" cy="144.5" rx="1.1" ry="1.6" fill="#1d1d1d"/><ellipse cx="250.5" cy="144.5" rx="1.1" ry="1.6" fill="#1d1d1d"/>
<path d="M244 148 Q246.5 150 249 148" stroke="#1d1d1d" stroke-width=".6" fill="none"/>
<ellipse cx="250.5" cy="133.5" rx="16.5" ry="5.8" transform="rotate(22 250.5 133.5)" fill="#f7d64a" stroke="#fff" stroke-width="1.8"/>
<path d="M244.5 131 Q246 121 250 121 Q254 122 255.5 133 Q250 135 244.5 131Z" fill="#f7d64a" stroke="#fff" stroke-width="1.2"/>
<path d="M240 130 Q251 131 262 139" stroke="#d776b8" stroke-width="1.6" fill="none" stroke-dasharray="2 1"/>
<path d="M231 149 L235 157 M267 150 L263 158" stroke="#fff" stroke-width="3"/>
<path d="M231 149 L235 157 M267 150 L263 158" stroke="#6cc94a" stroke-width="1.6"/>
<circle cx="229.7" cy="144" r="3.6" fill="#f0c84a" stroke="#fff" stroke-width="1.6"/>
<path d="M227 143.5 L232 142.5 M227.5 146 L232 145" stroke="#8a6ad0" stroke-width=".9"/>
<circle cx="268" cy="146.5" r="3.6" fill="#f0c84a" stroke="#fff" stroke-width="1.6"/>
<path d="M265.5 146 L270.5 145 M266 148.5 L270.5 147.5" stroke="#8a6ad0" stroke-width=".9"/>
</g>
</g>
</svg>

<!-- beautify pill -->
<div class="a" style="left:387px;top:347px;width:118px;height:23px;border-radius:11.5px;background:#edf0f4"></div>
<svg style="left:398px;top:354px" width="8" height="9" viewBox="0 0 8 9"><path d="M0.5 8.5L3 4.5 5.5 7Z" fill="#f29900"/><path d="M2.5 5L4 1 5 4 7.5 5.5 5 7Z" fill="#fbbc04"/><circle cx="4" cy="1.2" r=".9" fill="#fcd36a"/><circle cx="7" cy="6.5" r=".8" fill="#fcd36a"/></svg>
<div class="t" style="left:413px;top:354.4px;font-size:8.9px;line-height:8.9px;color:#1f1f1f;-webkit-text-stroke:.3px #1f1f1f">Beautify this slide</div>
<svg style="left:489px;top:354px" width="8" height="8" viewBox="0 0 8 8"><path d="M0.7 0.7L7.3 7.3M7.3 0.7L0.7 7.3" stroke="#1f1f1f" stroke-width="1.2"/></svg>
<div class="a" style="left:427px;top:375.3px;width:28px;height:2px;background:#8a8c8e;border-radius:1px"></div>

<!-- ============ RIGHT SIDE PANEL ============ -->
<div class="a" style="left:762.5px;top:183.8px;width:27.5px;height:27.6px;border-radius:7px;background:#edf0f4"></div>
<svg style="left:770px;top:192px" width="11" height="12" viewBox="0 0 11 12"><path d="M0.5 11.5L4 6 7.5 9.5Z" fill="#f29900"/><path d="M3 7L5.5 1.5 7 5.5 10.5 7.5 7 9.5Z" fill="#fbbc04"/><circle cx="8.8" cy="2.2" r="1.3" fill="#fbbc04"/><circle cx="5.5" cy="1.5" r=".9" fill="#fcd36a"/></svg>
<div class="a" style="left:761.7px;top:215.8px;width:29px;height:110.2px;border-radius:14.5px;background:#edf0f4"></div>
<svg style="left:771.5px;top:227px" width="10" height="9" viewBox="0 0 10 9"><rect x="0.6" y="0.6" width="8.8" height="7.8" rx="0.8" fill="none" stroke="#444" stroke-width="1.1"/><path d="M2.3 3H4.8V6H2.3Z" fill="#444"/><path d="M6 3.2H8M6 5.5H8" stroke="#444" stroke-width="0.9"/></svg>
<svg style="left:771.5px;top:252px" width="10" height="10" viewBox="0 0 10 10"><rect x="2.6" y="0.6" width="6.8" height="6.8" rx="0.8" fill="none" stroke="#444" stroke-width="1.1"/><path d="M0.6 2.5V9.4H7.5" fill="none" stroke="#444" stroke-width="1.1"/><circle cx="6" cy="4" r="1.4" fill="none" stroke="#444" stroke-width="0.9"/></svg>
<svg style="left:771.5px;top:279px" width="10" height="10" viewBox="0 0 10 10"><path d="M5 1H0.6V9.4H9.4V6" fill="none" stroke="#444" stroke-width="1.1"/><circle cx="7.3" cy="2.6" r="1.6" fill="none" stroke="#444" stroke-width="0.9"/><path d="M1.5 8.5L3.5 6 5 7.5 6 6.5 8.5 8.5Z" fill="#444"/></svg>
<svg style="left:771.5px;top:305.5px" width="11" height="9" viewBox="0 0 11 9"><path d="M0.6 0.6H4L5 1.8H10.4V8.4H0.6Z" fill="none" stroke="#444" stroke-width="1.1"/><path d="M0.6 3H10.4" stroke="#444" stroke-width="0.8"/></svg>

<!-- ============ BOTTOM ============ -->
<svg style="left:16.8px;top:400.5px" width="8.6" height="8.6" viewBox="0 0 8.6 8.6"><g fill="none" stroke="#444" stroke-width="1.1"><rect x="0.55" y="0.55" width="2.9" height="2.9" rx=".4"/><rect x="5.15" y="0.55" width="2.9" height="2.9" rx=".4"/><rect x="0.55" y="5.15" width="2.9" height="2.9" rx=".4"/><rect x="5.15" y="5.15" width="2.9" height="2.9" rx=".4"/></g></svg>
<svg style="left:47px;top:401.5px" width="5" height="7" viewBox="0 0 5 7"><path d="M4 0.6L1.2 3.5 4 6.4" fill="none" stroke="#444" stroke-width="1.2"/></svg>
<div class="a" style="left:138px;top:388px;width:605.5px;height:28px;border-radius:4px;background:#edf0f6"></div>
<div class="t" style="left:148px;top:397.2px;font-size:8.4px;line-height:8.4px;color:#1f1f1f;-webkit-text-stroke:.25px #1f1f1f">Click to add speaker notes</div>
<div class="a" style="left:785.5px;top:399.5px;width:21px;height:21px;border-radius:50%;background:#fff;box-shadow:0 1px 3px rgba(0,0,0,.25)"></div>
<svg style="left:791.5px;top:406px" width="5" height="8" viewBox="0 0 5 8"><path d="M4.2 0.7L1 4 4.2 7.3" fill="none" stroke="#444" stroke-width="1.1"/></svg>

<!-- ============ TASKBAR ============ -->

<div class="a" style="left:0;top:425.5px;width:800px;height:23.5px;background:#20323e"></div>
<div class="a" style="left:0;top:424.5px;width:800px;height:1px;background:#d7d9db"></div>
<!-- windows logo -->
<svg style="left:9px;top:432.5px" width="10.5" height="10" viewBox="0 0 10.5 10"><path d="M0 1.4L4.3 0.8V4.6H0Z M5 0.7L10.5 0V4.6H5Z M0 5.4H4.3V9.2L0 8.6Z M5 5.4H10.5V10L5 9.3Z" fill="#fff"/></svg>
<!-- search box -->
<div class="a" style="left:27.8px;top:426px;width:169.2px;height:23px;background:#f2f2f2"></div>
<svg style="left:35.2px;top:432.5px" width="10" height="10" viewBox="0 0 10 10"><circle cx="6" cy="4" r="3.1" fill="none" stroke="#222" stroke-width="1"/><path d="M3.8 6.2L0.6 9.4" stroke="#222" stroke-width="1.1"/></svg>
<div class="t" style="left:51.7px;top:432.9px;font-size:9px;line-height:9px;color:#333;transform:scaleX(0.94)">Type here to search</div>
<svg style="left:152px;top:426px" width="45" height="23" viewBox="0 0 45 23">
<path d="M22 0H45V23H14Z" fill="#d8c7b0"/>
<path d="M10 9Q20 4 30 2L37 0H45V8Z" fill="#b6c89a" opacity=".8"/>
<path d="M4 13Q14 9 25 8L43 7V15L5 19Z" fill="#d8353a"/>
<path d="M6 15L42 11" stroke="#f0a0c0" stroke-width=".8"/>
<g fill="#7ea84a"><rect x="12" y="18" width="3" height="5" rx="1.5"/><rect x="18" y="17" width="3" height="6" rx="1.5"/><rect x="24" y="17" width="3" height="6" rx="1.5"/><rect x="30" y="16" width="3" height="7" rx="1.5"/><rect x="36" y="16" width="3" height="7" rx="1.5"/></g>
<circle cx="35" cy="7" r="1.8" fill="#222"/>
</svg>
<!-- cortana -->
<div class="a" style="left:206.4px;top:433.4px;width:8.6px;height:8.6px;border-radius:50%;border:1.3px solid #fff"></div>
<!-- task view -->
<svg style="left:233.5px;top:432px" width="12" height="10" viewBox="0 0 12 10"><rect x="2.5" y="1.5" width="5.5" height="7" fill="none" stroke="#fff" stroke-width="1"/><path d="M0.5 1V9M10 1.5V3.5M10 6.5V8.5" stroke="#fff" stroke-width="1"/></svg>
<!-- file explorer -->
<svg style="left:262px;top:431.5px" width="13.5" height="11" viewBox="0 0 13.5 11"><path d="M0 1H5L6 2.3H13.5V11H0Z" fill="#f0c33c"/><rect x="0" y="3.5" width="13.5" height="7.5" fill="#f7d458"/><rect x="3" y="6.5" width="7.5" height="3" fill="#2f7fd0"/></svg>
<div class="a" style="left:257px;top:447.5px;width:23px;height:1.5px;background:#8fb4dc"></div>
<!-- notepad-like -->
<svg style="left:290.5px;top:431px" width="12" height="12" viewBox="0 0 12 12"><path d="M3 1L12 2.5 9 11.5 0 10Z" fill="#9fc4e6"/><path d="M3 1L12 2.5 11 5.5 2 4Z" fill="#cfe3f3"/></svg>
<!-- chrome 1 -->
<svg style="left:319px;top:431px" width="15" height="14" viewBox="0 0 15 14"><circle cx="6.8" cy="6.8" r="6.5" fill="#db4437"/><path d="M6.8 6.8L0.3 6.8A6.5 6.5 0 0 0 3.5 12.4Z" fill="#0f9d58"/><path d="M6.8 6.8L3.5 12.4A6.5 6.5 0 0 0 12.6 9.8 Z" fill="#0f9d58"/><path d="M6.8 6.8L12.6 9.8A6.5 6.5 0 0 0 13.1 4.9Z" fill="#ffcd40"/><circle cx="6.8" cy="6.8" r="3" fill="#fff"/><circle cx="6.8" cy="6.8" r="2.3" fill="#4285f4"/><rect x="8.5" y="7" width="6.5" height="7" rx="2" fill="#4b3ac4"/></svg>
<div class="a" style="left:314px;top:447.5px;width:24px;height:1.5px;background:#8fb4dc"></div>
<!-- chrome active -->
<div class="a" style="left:341px;top:425.5px;width:27.3px;height:23.5px;background:#37434e"></div>
<svg style="left:348.5px;top:431px" width="15" height="14" viewBox="0 0 15 14"><circle cx="6.8" cy="6.8" r="6.5" fill="#db4437"/><path d="M6.8 6.8L0.3 6.8A6.5 6.5 0 0 0 3.5 12.4Z" fill="#0f9d58"/><path d="M6.8 6.8L3.5 12.4A6.5 6.5 0 0 0 12.6 9.8 Z" fill="#0f9d58"/><path d="M6.8 6.8L12.6 9.8A6.5 6.5 0 0 0 13.1 4.9Z" fill="#ffcd40"/><circle cx="6.8" cy="6.8" r="3" fill="#fff"/><circle cx="6.8" cy="6.8" r="2.3" fill="#4285f4"/><circle cx="10.5" cy="10" r="4" fill="#141a3a"/><path d="M10.5 7.8L12 8.9 10.5 10 9 8.9Z M10.5 10L12 11.1 10.5 12.2 9 11.1Z" fill="none" stroke="#fff" stroke-width=".6"/></svg>
<div class="a" style="left:341px;top:447.5px;width:27.3px;height:1.5px;background:#8fb4dc"></div>
<!-- app 3 -->
<svg style="left:376px;top:431px" width="16" height="14" viewBox="0 0 16 14"><rect x="0.5" y="1" width="13" height="10" rx="2.5" fill="#5fa6e8"/><rect x="3" y="3.5" width="8" height="5" rx="1.5" fill="#fff"/><rect x="8.5" y="7" width="7" height="7" rx="2.5" fill="#4b3ac4"/></svg>
<div class="a" style="left:372px;top:447.5px;width:23px;height:1.5px;background:#8fb4dc"></div>
<!-- tray -->
<div class="a" style="left:606.8px;top:432.3px;width:11px;height:11px;border-radius:50%;background:radial-gradient(circle at 40% 40%,#f8b24a,#ef8a2a)"></div>
<div class="t" style="left:624px;top:433.5px;font-size:8.4px;line-height:8.4px;color:#fff">23°C</div>
<div class="t" style="left:646.5px;top:433.5px;font-size:8.4px;line-height:8.4px;color:#fff">Sunny</div>
<svg style="left:678px;top:434.5px" width="8" height="5" viewBox="0 0 8 5"><path d="M0.7 4.3L4 1 7.3 4.3" fill="none" stroke="#fff" stroke-width="1"/></svg>
<svg style="left:690px;top:432px" width="11" height="11" viewBox="0 0 11 11"><rect x="0.5" y="0.5" width="9" height="8" fill="none" stroke="#fff" stroke-width="1"/><path d="M3 3L7 6M7 3L3 6" stroke="#fff" stroke-width=".8"/><circle cx="8.5" cy="8.5" r="2" fill="#e5403a"/></svg>
<svg style="left:705.5px;top:432.5px" width="11" height="10" viewBox="0 0 11 10"><rect x="3" y="0.5" width="7.5" height="6" fill="none" stroke="#fff" stroke-width="1"/><path d="M0.5 3V9.5H6M5 6.5V9.5" fill="none" stroke="#fff" stroke-width="1"/></svg>
<svg style="left:720.5px;top:432.5px" width="11" height="10" viewBox="0 0 11 10"><path d="M0.5 3.5H2.5L5 1V9L2.5 6.5H0.5Z" fill="none" stroke="#fff" stroke-width="1"/><path d="M7 3Q8 5 7 7M8.7 1.8Q10.5 5 8.7 8.2" fill="none" stroke="#fff" stroke-width=".9"/></svg>
<div class="t" style="left:736px;top:428.3px;font-size:8px;line-height:8px;color:#fff;transform:scaleX(0.86)">10:01 PM</div>
<div class="t" style="left:735px;top:439.3px;font-size:8px;line-height:8px;color:#fff;transform:scaleX(0.82)">11/22/2025</div>
<svg style="left:775.5px;top:432px" width="10" height="11" viewBox="0 0 10 11"><path d="M0.5 0.5H9.5V7.5H6L3.5 10V7.5H0.5Z" fill="none" stroke="#fff" stroke-width="1"/></svg>




</body></html>
